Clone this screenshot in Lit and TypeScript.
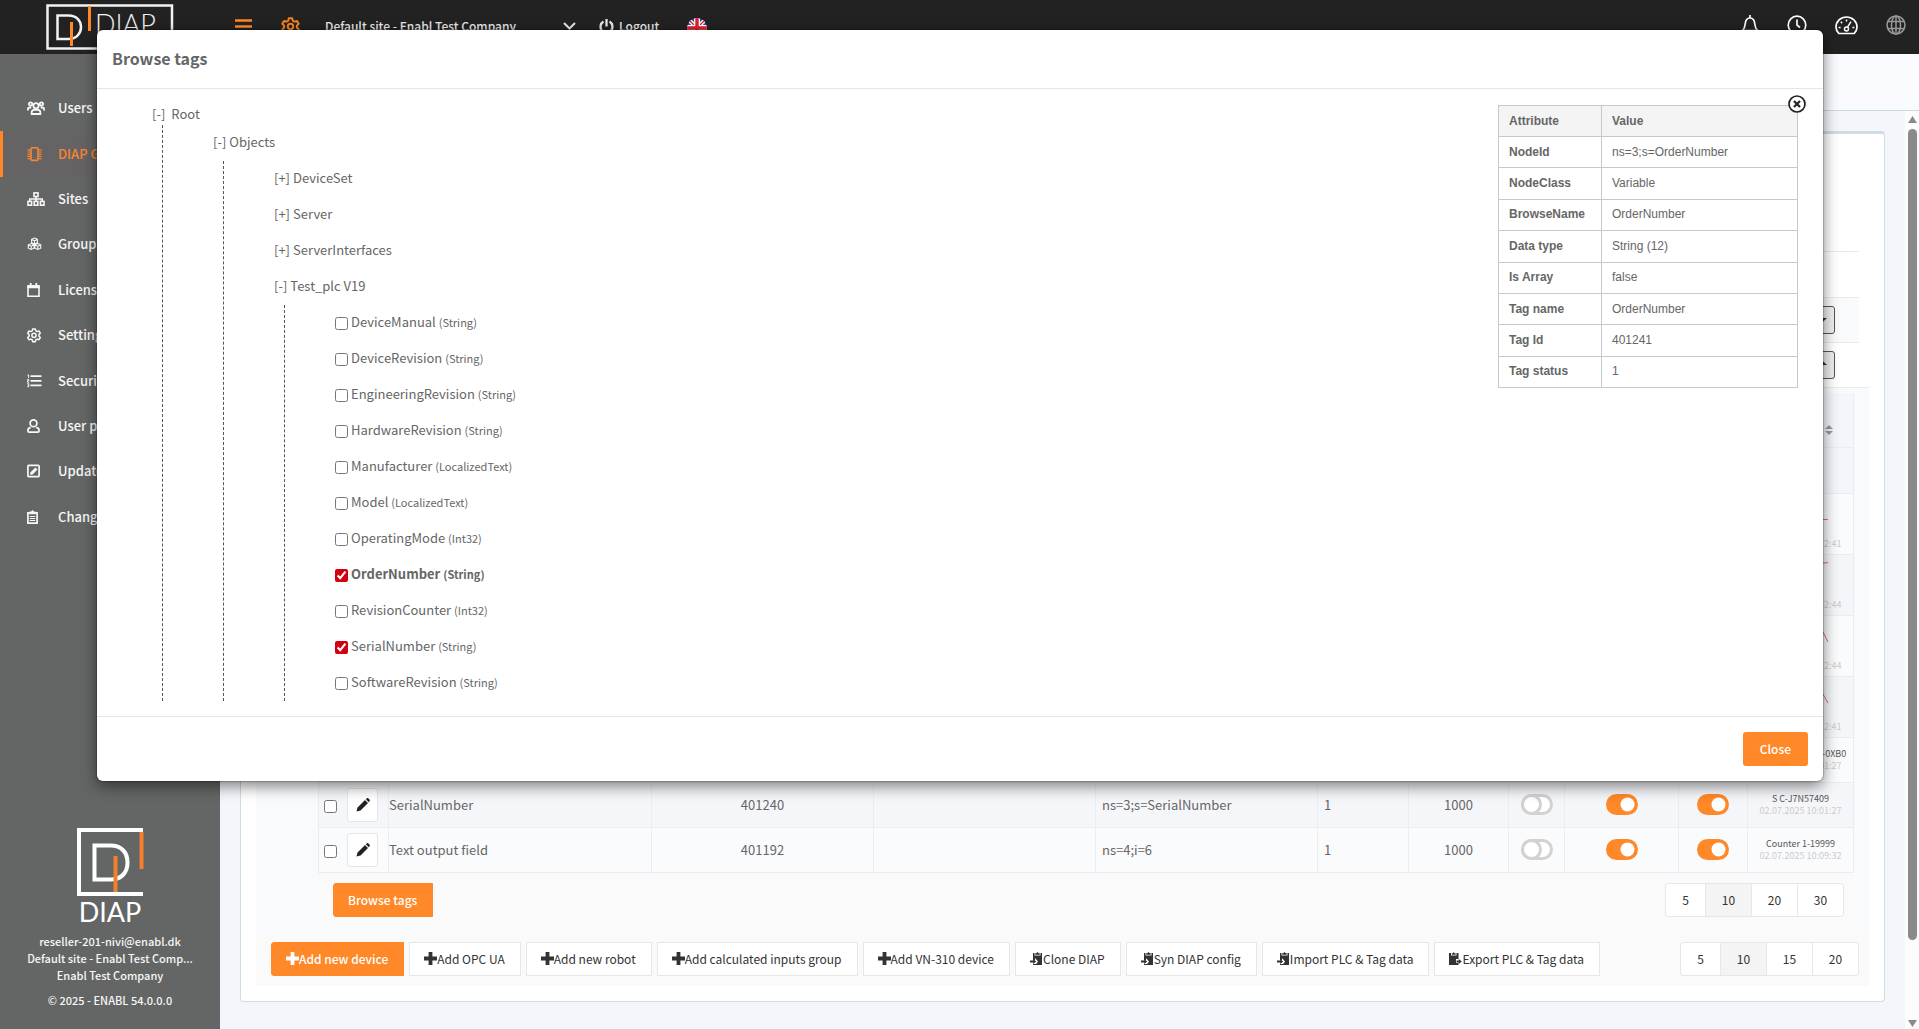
import { LitElement, html, svg, css, nothing, TemplateResult } from "lit";
import { customElement } from "lit/decorators.js";

const glyphs: Record<string, TemplateResult> = {
  users: svg`<g fill="none" stroke="currentColor" stroke-width="1.8"><circle cx="9" cy="4.8" r="2.6"/><path d="M4.6 13v-1.200c0-2 1.200-3 2.600-3h3.600c1.400 0 2.600 1 2.600 3V13z"/><circle cx="3.600" cy="3" r="1.700"/><circle cx="14.400" cy="3" r="1.700"/><path d="M.9 9.600V8.400c0-1.200.8-1.900 2-1.900h1.400M17.100 9.600V8.400c0-1.200-.8-1.900-2-1.900h-1.400"/></g>`,
  chip: svg`<g fill="none" stroke="currentColor"><rect x="4" y=".8" width="7" height="12.600" rx="1" stroke-width="1.600"/><path d="M.5 2.800h3M.5 5h3M.5 7.200h3M.5 9.400h3M.5 11.600h3M11.500 2.800h3M11.500 5h3M11.500 7.200h3M11.500 9.400h3M11.500 11.600h3" stroke-width="1.200"/></g>`,
  sites: svg`<g fill="none" stroke="currentColor" stroke-width="1.600"><rect x="7" y=".9" width="4" height="3.600"/><rect x="1" y="9.400" width="3.600" height="3.800"/><rect x="7.200" y="9.400" width="3.600" height="3.800"/><rect x="13.400" y="9.400" width="3.600" height="3.800"/><path d="M9 4.500v4.900M2.800 9.400V7h12.400v2.400"/></g>`,
  groups: svg`<g fill="none" stroke="currentColor" stroke-width="1.100"><path d="M7.500 1l2.900 1.300v3.400L7.500 7 4.600 5.700V2.300zM4.200 6.500l2.900 1.300v3.400l-2.900 1.300-2.900-1.300V7.800zM10.800 6.500l2.900 1.300v3.400l-2.900 1.300-2.900-1.300V7.800zM4.600 2.400l2.900 1.300 2.900-1.300M7.500 3.700V7M1.300 7.900l2.900 1.300 2.900-1.300M4.200 9.200v3.300M7.900 7.900l2.900 1.300 2.900-1.300M10.800 9.200v3.300"/></g>`,
  calendar: svg`<path fill="none" stroke="currentColor" stroke-width="1.600" d="M1 3.500h11v9.700H1z"/><path fill="currentColor" d="M.3 2h12.400v3.200H.3zM2.800 0h1.800v3H2.800zM8.400 0h1.800v3H8.400z"/>`,
  gear: svg`<path fill="none" stroke="currentColor" stroke-width="1.500" stroke-linejoin="round" d="M5.700 1h2.600l.5 1.900 1.300.7 1.900-.6 1.300 2.200-1.400 1.400v1.500l1.400 1.400-1.300 2.200-1.900-.6-1.300.7-.5 1.900H5.700l-.5-1.900-1.300-.7-1.900.6L.7 9.500l1.400-1.400V6.600L.7 5.200 2 3l1.900.6 1.300-.7z"/><circle cx="7" cy="7.300" r="2.100" fill="none" stroke="currentColor" stroke-width="1.500"/>`,
  list: svg`<path fill="none" stroke="currentColor" stroke-width="1.800" d="M3.500 2.200h11M3.500 6.800h11M3.500 11.400h11"/><path fill="none" stroke="currentColor" d="M.4 1h1.200v3M.3 5.500h1.500v1.200H.5v1.500h1.600M.3 9.700h1.500v3H.3M.6 11.200h1"/>`,
  user: svg`<circle cx="6.500" cy="4.300" r="3.400" fill="none" stroke="currentColor" stroke-width="1.700"/><path fill="none" stroke="currentColor" stroke-width="1.700" d="M3.800 8.500C1.800 8.600.9 10 .9 11.700c0 1 .5 1.500 1.300 1.500h8.600c.8 0 1.300-.5 1.300-1.500 0-1.700-.9-3.100-2.900-3.200"/>`,
  edit: svg`<rect x=".9" y="1.400" width="11.200" height="11.200" rx=".8" fill="none" stroke="currentColor" stroke-width="1.700"/><path fill="currentColor" d="M3 10.700l.5-2.400 4.900-4.900L10.500 5.500l-4.900 4.900z"/>`,
  notes: svg`<path fill="none" stroke="currentColor" stroke-width="1.700" d="M.9 2.800h9.200v10.400H.9z"/><path fill="currentColor" d="M2.500 1.600h1.600L5.500 0l1.400 1.600h1.600v2.600h-6z"/><path stroke="currentColor" d="M2.700 6.500h5.600M2.700 8.500h5.600M2.700 10.500h5.600"/>`,
};

const MENU = [
  { icon: "users", label: "Users" },
  { icon: "chip", label: "DIAP Gateways", active: true },
  { icon: "sites", label: "Sites" },
  { icon: "groups", label: "Groups" },
  { icon: "calendar", label: "Licenses" },
  { icon: "gear", label: "Settings" },
  { icon: "list", label: "Security" },
  { icon: "user", label: "User profile" },
  { icon: "edit", label: "Updates" },
  { icon: "notes", label: "Changelog" },
];

const TAGS = [
  ["DeviceManual", "String"],
  ["DeviceRevision", "String"],
  ["EngineeringRevision", "String"],
  ["HardwareRevision", "String"],
  ["Manufacturer", "LocalizedText"],
  ["Model", "LocalizedText"],
  ["OperatingMode", "Int32"],
  ["OrderNumber", "String"],
  ["RevisionCounter", "Int32"],
  ["SerialNumber", "String"],
  ["SoftwareRevision", "String"],
];
const CHECKED = new Set(["OrderNumber", "SerialNumber"]);
const SELECTED = "OrderNumber";

const ATTRIBUTES = [
  ["NodeId", "ns=3;s=OrderNumber"],
  ["NodeClass", "Variable"],
  ["BrowseName", "OrderNumber"],
  ["Data type", "String (12)"],
  ["Is Array", "false"],
  ["Tag name", "OrderNumber"],
  ["Tag Id", "401241"],
  ["Tag status", "1"],
];

const TREND_ROWS = [
  { time: "02.07.2025 10:12:41", line: "M0 25.500H54" },
  { time: "02.07.2025 10:12:44", line: "M0 18L44 9L54 7.500" },
  { time: "02.07.2025 10:12:44", line: "M0 8L44 6L54 26" },
  { time: "02.07.2025 10:12:41", line: "M0 8L46 12L54 26" },
];

const ROWS = [
  { name: "SerialNumber", id: "401240", node: "ns=3;s=SerialNumber", value: "S C-J7N57409", time: "02.07.2025 10:01:27" },
  { name: "Text output field", id: "401192", node: "ns=4;i=6", value: "Counter 1-19999", time: "02.07.2025 10:09:32" },
];

const ACTIONS = [
  { icon: "plus", label: "Add new device", primary: true },
  { icon: "plus", label: "Add OPC UA" },
  { icon: "plus", label: "Add new robot" },
  { icon: "plus", label: "Add calculated inputs group" },
  { icon: "plus", label: "Add VN-310 device" },
  { icon: "import", label: "Clone DIAP" },
  { icon: "import", label: "Syn DIAP config" },
  { icon: "import", label: "Import PLC & Tag data" },
  { icon: "export", label: "Export PLC & Tag data" },
];

const base = css`
  :host { font-family: "Noto Sans CJK SC", "Noto Sans", sans-serif; font-size: 13px; line-height: 20px; color: #666; }
  * { box-sizing: border-box; }
  button, input { font: inherit; margin: 0; }
  button { cursor: pointer; }
  a { color: inherit; text-decoration: none; }
  svg { display: block; flex: none; overflow: visible; }
`;

@customElement("top-bar")
class TopBar extends LitElement {
  static styles = [base, css`
    :host { display: flex; align-items: flex-start; height: 54px; background: #222; color: #e6e6e6; font-size: 12px; font-weight: 500; flex: none; }
    .logo { padding: 4px 0 0 46px; width: 235px; }
    .logo text { font: 300 27px Lato, sans-serif; }
    .plain { background: none; border: 0; padding: 0; color: inherit; display: flex; align-items: center; gap: 5px; height: 20px; }
    .tools { display: flex; align-items: center; height: 52px; flex: 1; }
    .menu { color: #ff8828; width: 46px; }
    .cog { color: #f58220; width: 44px; }
    .site { width: 238px; justify-content: flex-start; }
    .chev { width: 35px; }
    .out { width: 88px; margin-left: 1px; }
    .right { display: flex; align-items: center; gap: 28px; height: 50px; padding-right: 13px; color: #fff; }
    .dim { color: #999; }
  `];
  render() {
    return html`
      <a class="logo" href="#" aria-label="Home">
        <svg width="128" height="46" viewBox="0 0 128 46">
          <path d="M42.500 1.500H1.500v43h124.500V1.500z" fill="none" stroke="#f2f2f2" stroke-width="2.500"/>
          <path d="M11.500 11.500h11c8 0 12.500 5 12.500 11.500s-4.500 12-12.500 12h-11z" fill="none" stroke="#f2f2f2" stroke-width="2.500"/>
          <path d="M25.500 18v24M43.500 2v25" stroke="#ff8828" stroke-width="3"/>
          <text x="49" y="30" fill="#f2f2f2">DIAP</text>
        </svg>
      </a>
      <div class="tools">
        <button class="plain menu" aria-label="Menu"><svg width="17" height="15" viewBox="0 0 17 15"><path d="M0 1.500h17M0 7.500h17M0 13.500h17" stroke="currentColor" stroke-width="2.500"/></svg></button>
        <button class="plain cog" aria-label="Settings"><svg width="19" height="19" viewBox="0 0 14 14.600">${glyphs.gear}</svg></button>
        <button class="plain site">Default site - Enabl Test Company</button>
        <button class="plain chev" aria-label="Choose site"><svg width="13" height="8" viewBox="0 0 13 8"><path d="M1 1l5.500 5.500L12 1" fill="none" stroke="currentColor" stroke-width="2"/></svg></button>
        <button class="plain out"><svg width="15" height="15" viewBox="0 0 15 15"><path d="M4.500 2.600a6 6 0 1 0 6 0M7.500 0v7.500" fill="none" stroke="currentColor" stroke-width="2.300"/></svg>Logout</button>
        <button class="plain" aria-label="Language"><svg width="20" height="16" viewBox="0 0 20 16">
          <clipPath id="round"><circle cx="10" cy="10" r="10"/></clipPath>
          <g clip-path="url(#round)"><path fill="#2b4fa8" d="M0 0h20v20H0z"/><path d="M0 0l20 20M20 0L0 20" stroke="#fff" stroke-width="4"/><path d="M0 0l20 20M20 0L0 20" stroke="#d8222f" stroke-width="1.300"/><path d="M10 0v20M0 10h20" stroke="#fff" stroke-width="6"/><path d="M10 0v20M0 10h20" stroke="#e0202e" stroke-width="3.400"/></g></svg></button>
      </div>
      <div class="right">
        <button class="plain" aria-label="Notifications"><svg width="18" height="20" viewBox="0 0 18 20"><path d="M1.500 15.500h15c-1.800-1.600-2.400-3.500-2.700-6.500C13.500 5.200 12 3 9 3S4.500 5.200 4.200 9c-.3 3-.9 4.900-2.700 6.500zM9 0v3" fill="none" stroke="currentColor" stroke-width="1.700"/></svg></button>
        <button class="plain" aria-label="History"><svg width="20" height="20" viewBox="0 0 20 20"><circle cx="10" cy="10" r="8.800" fill="none" stroke="currentColor" stroke-width="1.700"/><path d="M10 4.500V10l3 2.500" fill="none" stroke="currentColor" stroke-width="1.700"/></svg></button>
        <button class="plain" aria-label="Dashboard"><svg width="23" height="19" viewBox="0 0 23 19"><path d="M3.800 17.500C2.100 15.700 1 13.800 1 11.300 1 5.500 5.700 1 11.500 1S22 5.500 22 11.300c0 2.500-1.100 4.400-2.800 6.200z" fill="none" stroke="currentColor" stroke-width="1.700"/><circle cx="11.500" cy="13" r="2" fill="none" stroke="currentColor" stroke-width="1.500"/><path d="M12.500 11.200l3.500-5.500" stroke="currentColor" stroke-width="1.500"/><path d="M3.600 11.500h2M17.400 11.500h2M5.800 5.800l1.300 1.300M11.500 3.400v2" stroke="currentColor" stroke-width="1.500"/></svg></button>
        <button class="plain dim" aria-label="Web"><svg width="20" height="20" viewBox="0 0 20 20"><g fill="none" stroke="currentColor" stroke-width="1.500"><circle cx="10" cy="10" r="9"/><ellipse cx="10" cy="10" rx="4.500" ry="9"/><path d="M10 1v18M1.800 6.500h16.400M1.800 13.500h16.400"/></g></svg></button>
      </div>`;
  }
}

@customElement("side-bar")
class SideBar extends LitElement {
  static styles = [base, css`
    :host { display: flex; flex-direction: column; width: 220px; flex: none; background: #646665; color: #f7f7f7; font-weight: 500; padding-top: 32px; }
    nav { display: grid; grid-auto-rows: 1fr; height: 454px; }
    .item { display: flex; align-items: center; padding: 0 0 1px 27px; }
    .item .pic { width: 31px; }
    .active { color: #f98536; background: #656363; border-left: 3px solid #ff8828; padding-left: 24px; }
    footer { margin-top: auto; padding-bottom: 21px; text-align: center; font-size: 11px; line-height: 17px; display: flex; flex-direction: column; align-items: center; }
    footer text { font: 400 27px Lato, sans-serif; }
    footer svg { margin-bottom: 8px; }
    .copy { margin-top: 8px; }
  `];
  render() {
    return html`
      <nav>${MENU.map((m) => html`<a href="#" class="item ${m.active ? "active" : ""}"><span class="pic"><svg width="18" height="14" viewBox="0 0 18 14">${glyphs[m.icon]}</svg></span>${m.label}</a>`)}</nav>
      <footer>
        <svg width="66" height="97" viewBox="0 0 66 97">
          <path d="M66 2H2v64h64" fill="none" stroke="#fff" stroke-width="4"/>
          <path d="M17.500 17.500h16c11 0 17 7 17 17s-6 17-17 17h-16z" fill="none" stroke="#fff" stroke-width="4"/>
          <path d="M38.500 28v36M64.500 4v37" stroke="#f47f2e" stroke-width="4"/>
          <text x="33" y="94" text-anchor="middle" fill="#fff">DIAP</text>
        </svg>
        <span>reseller-201-nivi@enabl.dk</span>
        <span>Default site - Enabl Test Comp...</span>
        <span>Enabl Test Company</span>
        <span class="copy">© 2025 - ENABL 54.0.0.0</span>
      </footer>`;
  }
}

const toggle = (on: boolean, label: string) => html`
  <button class="switch" role="switch" aria-checked=${on ? "true" : "false"} aria-label=${label}>
    <svg width="32" height="21" viewBox="0 0 32 21">${on
      ? svg`<rect width="32" height="21" rx="10.500" fill="#ff8828"/><circle cx="21.500" cy="10.500" r="7" fill="#fff"/>`
      : svg`<rect x="1.500" y="1.500" width="29" height="18" rx="9" fill="#fff" stroke="#d2d2d2" stroke-width="3"/><circle cx="10.500" cy="10.500" r="9" fill="#fff" stroke="#d2d2d2" stroke-width="3"/>`}</svg>
  </button>`;

const pager = (sizes: number[]) => html`
  <div class="pager">${sizes.map((n) => html`<button class=${n === 10 ? "on" : ""}>${n}</button>`)}</div>`;

const actionIcon = (name: string) => html`<svg width="13" height="13" viewBox="0 0 13 13" fill="currentColor">${
  name === "plus"
    ? svg`<path d="M4.600 0h3.800v4.600H13v3.800H8.400V13H4.600V8.400H0V4.600h4.600z"/>`
    : name === "import"
      ? svg`<path d="M3 1h1.500v2.500h6V1H12v12H5.500L8 9.500 5 6v2H3zM5.200 1.200h1L7.500 0l1.300 1.200h1v1.600H5.200z"/><path d="M0 8.600h3.200V7l3 2.500-3 2.500v-1.600H0z"/><path d="M3 12h3v1H3z"/>`
      : svg`<path d="M0 1h2v2.500h5.500V1H9.500v6H7v4h2.500v2H0zM2.800 1.200H4L4.800 0l.8 1.200h1v1.600H2.800z"/><path d="M7.500 8.600h2.300V7l3 2.500-3 2.500v-1.600H7.500z"/>`
}</svg>`;

@customElement("device-page")
class DevicePage extends LitElement {
  static styles = [base, css`
    :host { display: flex; flex: 1; min-width: 0; background: #f5f6fb; flex-direction: column; }
    .strip { height: 57px; background: #fafbfe; border-bottom: 1px solid #c9d9e3; flex: none; }
    .scroll { display: flex; flex: 1; }
    .content { flex: 1; min-width: 0; padding: 20px 20px 28px; }
    .bar { width: 14px; background: #fcfcfc; display: flex; flex-direction: column; align-items: center; padding: 5px 0 3px; gap: 6px; }
    .thumb { width: 9px; height: 811px; border-radius: 5px; background: #8a8a8a; }
    .bar svg:last-child { margin-top: auto; }
    .card { background: #fff; border: 1px solid #ccdde3; border-top-width: 3px; border-radius: 4px; padding: 0 15px 15px; }
    .lead, .line { margin: 0 10px; border-bottom: 1px solid #e8ebee; }
    .lead { height: 118px; }
    .line { height: 46px; }
    .device { height: 45px; display: flex; align-items: center; justify-content: flex-end; padding-right: 24px; }
    .tint { background: #f9fafc; }
    .fold { width: 28px; height: 28px; background: #efefef; border: 1px solid #555; border-radius: 3px; padding: 0; display: flex; align-items: center; justify-content: center; color: #333; }
    .up { padding-bottom: 5px; }
    .last { margin: 0; padding-right: 34px; }
    .panel { background: #f9fafd; padding: 5px 15px 6px 62px; }
    table { border-collapse: collapse; table-layout: fixed; width: 100%; }
    th, td { border: 1px solid #ebedf0; padding: 0; text-align: center; }
    .c-pick { width: 70px; } .c-name { width: 263px; } .c-type { width: 91px; } .c-rate { width: 100px; }
    .c-a { width: 56px; } .c-b { width: 114px; } .c-c { width: 69px; } .c-v { width: 106px; }
    .head th { height: 54px; background: #f5f6fb; border-top: 0; }
    .filter td { height: 46px; background: #f5f6fb; }
    .trend td { height: 61px; vertical-align: top; }
    .row td { height: 45px; }
    .odd { background: #fafbfd; }
    .even { background: #f5f6fa; }
    .sort { margin: 20px auto 0 77px; }
    .left { text-align: left; }
    .pad { padding-left: 6px; }
    .pick { display: flex; align-items: center; gap: 10px; padding-left: 5px; }
    .pick input { width: 13px; height: 13px; margin-top: 3px; }
    .pen { width: 31px; height: 34px; border: 1px solid #e4e6e8; border-radius: 3px; background: #fff; padding: 0; display: flex; align-items: center; justify-content: center; color: #222; }
    .switch { background: none; border: 0; padding: 0; display: block; margin: 0 auto; }
    .value { font-size: 9px; line-height: 12px; color: #555; display: block; white-space: nowrap; }
    .time { font-size: 9px; line-height: 12px; color: #ccc; display: block; }
    .spark { margin: 0 auto; }
    .under { display: flex; justify-content: space-between; align-items: center; background: #fafafa; padding: 10px 10px 9px 15px; }
    .pager { display: flex; }
    .pager button { width: 47px; height: 34px; margin-left: -1px; background: #fff; border: 1px solid #e7e7e7; padding: 0; color: #333; font-size: 12px; }
    .pager button:first-child { width: 41px; border-radius: 3px 0 0 3px; margin: 0; }
    .pager button:last-child { border-radius: 0 3px 3px 0; }
    .pager .on { background: #f4f4f4; }
    .btn { height: 34px; border: 1px solid #e7e7e7; background: #fff; color: #333; padding: 0 15px 0 14px; font-size: 12px; display: flex; align-items: center; white-space: nowrap; }
    .primary { background: #ff8828; border-color: #ff8828; color: #fff; font-weight: 500; border-radius: 3px 0 0 3px; }
    .actions { display: flex; justify-content: space-between; background: #fafafa; padding: 10px 10px 10px 15px; }
    .group { display: flex; gap: 5px; }
  `];
  render() {
    return html`
      <div class="strip"></div>
      <div class="scroll">
        <div class="content"><div class="card">
          <div class="lead"></div>
          <div class="line"></div>
          <div class="line device tint"><button class="fold" aria-label="Expand"><svg width="11" height="5" viewBox="0 0 11 5"><path d="M0 0h11L5.500 5z" fill="currentColor"/></svg></button></div>
          <div class="line device last"><button class="fold up" aria-label="Collapse"><svg width="11" height="5" viewBox="0 0 11 5"><path d="M0 5h11L5.500 0z" fill="currentColor"/></svg></button></div>
          <div class="panel">
            <table>
              <colgroup><col class="c-pick"><col class="c-name"><col><col><col><col class="c-type"><col class="c-rate"><col class="c-a"><col class="c-b"><col class="c-c"><col class="c-v"></colgroup>
              <thead><tr class="head"><th></th><th></th><th></th><th></th><th></th><th></th><th></th><th></th><th></th><th></th>
                <th><svg class="sort" width="8" height="10" viewBox="0 0 8 10"><path d="M0 4h8L4 0zM0 6h8l-4 4z" fill="#999"/></svg></th></tr></thead>
              <tbody>
                <tr class="filter"><td colspan="10"></td><td></td></tr>
                ${TREND_ROWS.map((t, i) => html`<tr class="trend ${i % 2 ? "even" : "odd"}"><td colspan="10"></td>
                  <td><svg class="spark" width="54" height="44" viewBox="0 0 54 44"><path d=${t.line} fill="none" stroke="#e46a6a"/></svg><span class="time">${t.time}</span></td></tr>`)}
                <tr class="row odd"><td colspan="10"></td><td><span class="value">6ES7 515-2FN03-0XB0</span><span class="time">02.07.2025 10:01:27</span></td></tr>
                ${ROWS.map((r, i) => html`<tr class="row ${i % 2 ? "odd" : "even"}">
                  <td><div class="pick"><input type="checkbox" aria-label=${r.name}><button class="pen" aria-label="Edit"><svg width="14" height="14" viewBox="0 0 14 14"><path d="M.5 13.500l1-4L9 2l3 3-7.500 7.500zM9.800 1.200L11 .2c.4-.3.800-.3 1.200 0L13.700 1.700c.3.4.3.8 0 1.200L12.800 4.200z" fill="currentColor"/></svg></button></div></td>
                  <td class="left">${r.name}</td><td>${r.id}</td><td></td><td class="left pad">${r.node}</td><td class="left pad">1</td><td>1000</td>
                  <td>${toggle(false, "Alarm")}</td><td>${toggle(true, "Log")}</td><td>${toggle(true, "Active")}</td>
                  <td><span class="value">${r.value}</span><span class="time">${r.time}</span></td></tr>`)}
              </tbody>
            </table>
            <div class="under"><button class="btn primary">Browse tags</button>${pager([5, 10, 20, 30])}</div>
          </div>
          <div class="actions">
            <div class="group">${ACTIONS.map((a) => html`<button class="btn ${a.primary ? "primary" : ""}">${actionIcon(a.icon)}${a.label}</button>`)}</div>
            ${pager([5, 10, 15, 20])}
          </div>
        </div></div>
        <div class="bar">
          <svg width="9" height="7" viewBox="0 0 9 7"><path d="M0 7h9L4.500 0z" fill="#8a8a8a"/></svg>
          <div class="thumb"></div>
          <svg width="9" height="7" viewBox="0 0 9 7"><path d="M0 0h9L4.500 7z" fill="#8a8a8a"/></svg>
        </div>
      </div>`;
  }
}

@customElement("browse-dialog")
class BrowseDialog extends LitElement {
  static styles = [base, css`
    :host { position: absolute; inset: 0; padding: 30px 96px 0 97px; }
    .dialog { background: #fff; border-radius: 6px; box-shadow: 0 5px 15px rgba(0, 0, 0, 0.5), 0 0 1px 1px rgba(0, 0, 0, 0.2); }
    header { height: 59px; padding: 0 15px 2px; display: flex; align-items: center; border-bottom: 1px solid #e5e5e5; }
    h4 { margin: 0; font-size: 16px; font-weight: 700; line-height: 24px; }
    .body { display: flex; justify-content: space-between; padding: 15px; }
    .tree { flex: 1; padding-left: 40px; }
    ul { list-style: none; margin: 0; padding: 0; }
    ul ul { margin-left: 10px; padding-left: 50px; border-left: 1px dashed #555; }
    .node { height: 36px; display: flex; align-items: center; gap: 4px; padding-bottom: 2px; }
    .root { height: 21px; gap: 6px; }
    .tight { gap: 3px; }
    .exp { background: none; border: 0; padding: 0; color: inherit; }
    .tag input { width: 13px; height: 13px; accent-color: #d3000f; margin-top: 3px; }
    small { font-size: 11px; }
    .sel { font-weight: 600; }
    .info { position: relative; width: 300px; margin: 1px 10px 0 0; align-self: flex-start; }
    table { width: 100%; height: 283px; border-collapse: collapse; table-layout: fixed; font: 12px/17px "Liberation Sans", Arial, sans-serif; }
    th, td { border: 1px solid #c8c8c8; padding: 0 10px; text-align: left; }
    thead th { background: #f4f4f4; height: 31px; }
    .key { width: 103px; }
    .x { position: absolute; top: -10px; right: -8px; background: none; border: 0; padding: 0; color: #222; }
    footer { border-top: 1px solid #e5e5e5; padding: 15px; display: flex; justify-content: flex-end; }
    .close { height: 34px; padding: 0 17px 1px; border: 0; border-radius: 3px; background: #ff8828; color: #fff; font-size: 12px; font-weight: 500; }
  `];
  node(label: string, open: boolean, cls = "", children: unknown = nothing) {
    return html`<li><div class="node ${cls}"><button class="exp" aria-label=${open ? "Collapse" : "Expand"}>${open ? "[-]" : "[+]"}</button><span>${label}</span></div>${children}</li>`;
  }
  render() {
    const tags = html`<ul>${TAGS.map(([name, type]) => html`<li><label class="node tight tag ${name === SELECTED ? "sel" : ""}"><input type="checkbox" .checked=${CHECKED.has(name)}><span>${name} <small>(${type})</small></span></label></li>`)}</ul>`;
    const objects = html`<ul>${this.node("DeviceSet", false, "tight")}${this.node("Server", false, "tight")}${this.node("ServerInterfaces", false, "tight")}${this.node("Test_plc V19", true, "tight", tags)}</ul>`;
    return html`
      <div class="dialog" role="dialog" aria-labelledby="title">
        <header><h4 id="title">Browse tags</h4></header>
        <div class="body">
          <ul class="tree">${this.node("Root", true, "root", html`<ul>${this.node("Objects", true, "tight", objects)}</ul>`)}</ul>
          <div class="info">
            <table>
              <thead><tr><th class="key">Attribute</th><th>Value</th></tr></thead>
              <tbody>${ATTRIBUTES.map(([k, v]) => html`<tr><th>${k}</th><td>${v}</td></tr>`)}</tbody>
            </table>
            <button class="x" aria-label="Close details"><svg width="18" height="18" viewBox="0 0 18 18"><circle cx="9" cy="9" r="8" fill="#fff" stroke="currentColor" stroke-width="1.700"/><path d="M6 6l6 6M12 6l-6 6" stroke="currentColor" stroke-width="2.200"/></svg></button>
          </div>
        </div>
        <footer><button class="close">Close</button></footer>
      </div>`;
  }
}

@customElement("app-root")
class AppRoot extends LitElement {
  static styles = css`
    :host { display: flex; flex-direction: column; min-height: 100vh; position: relative; }
    .main { display: flex; flex: 1; }
  `;
  render() {
    return html`<top-bar></top-bar><div class="main"><side-bar></side-bar><device-page></device-page></div><browse-dialog></browse-dialog>`;
  }
}
